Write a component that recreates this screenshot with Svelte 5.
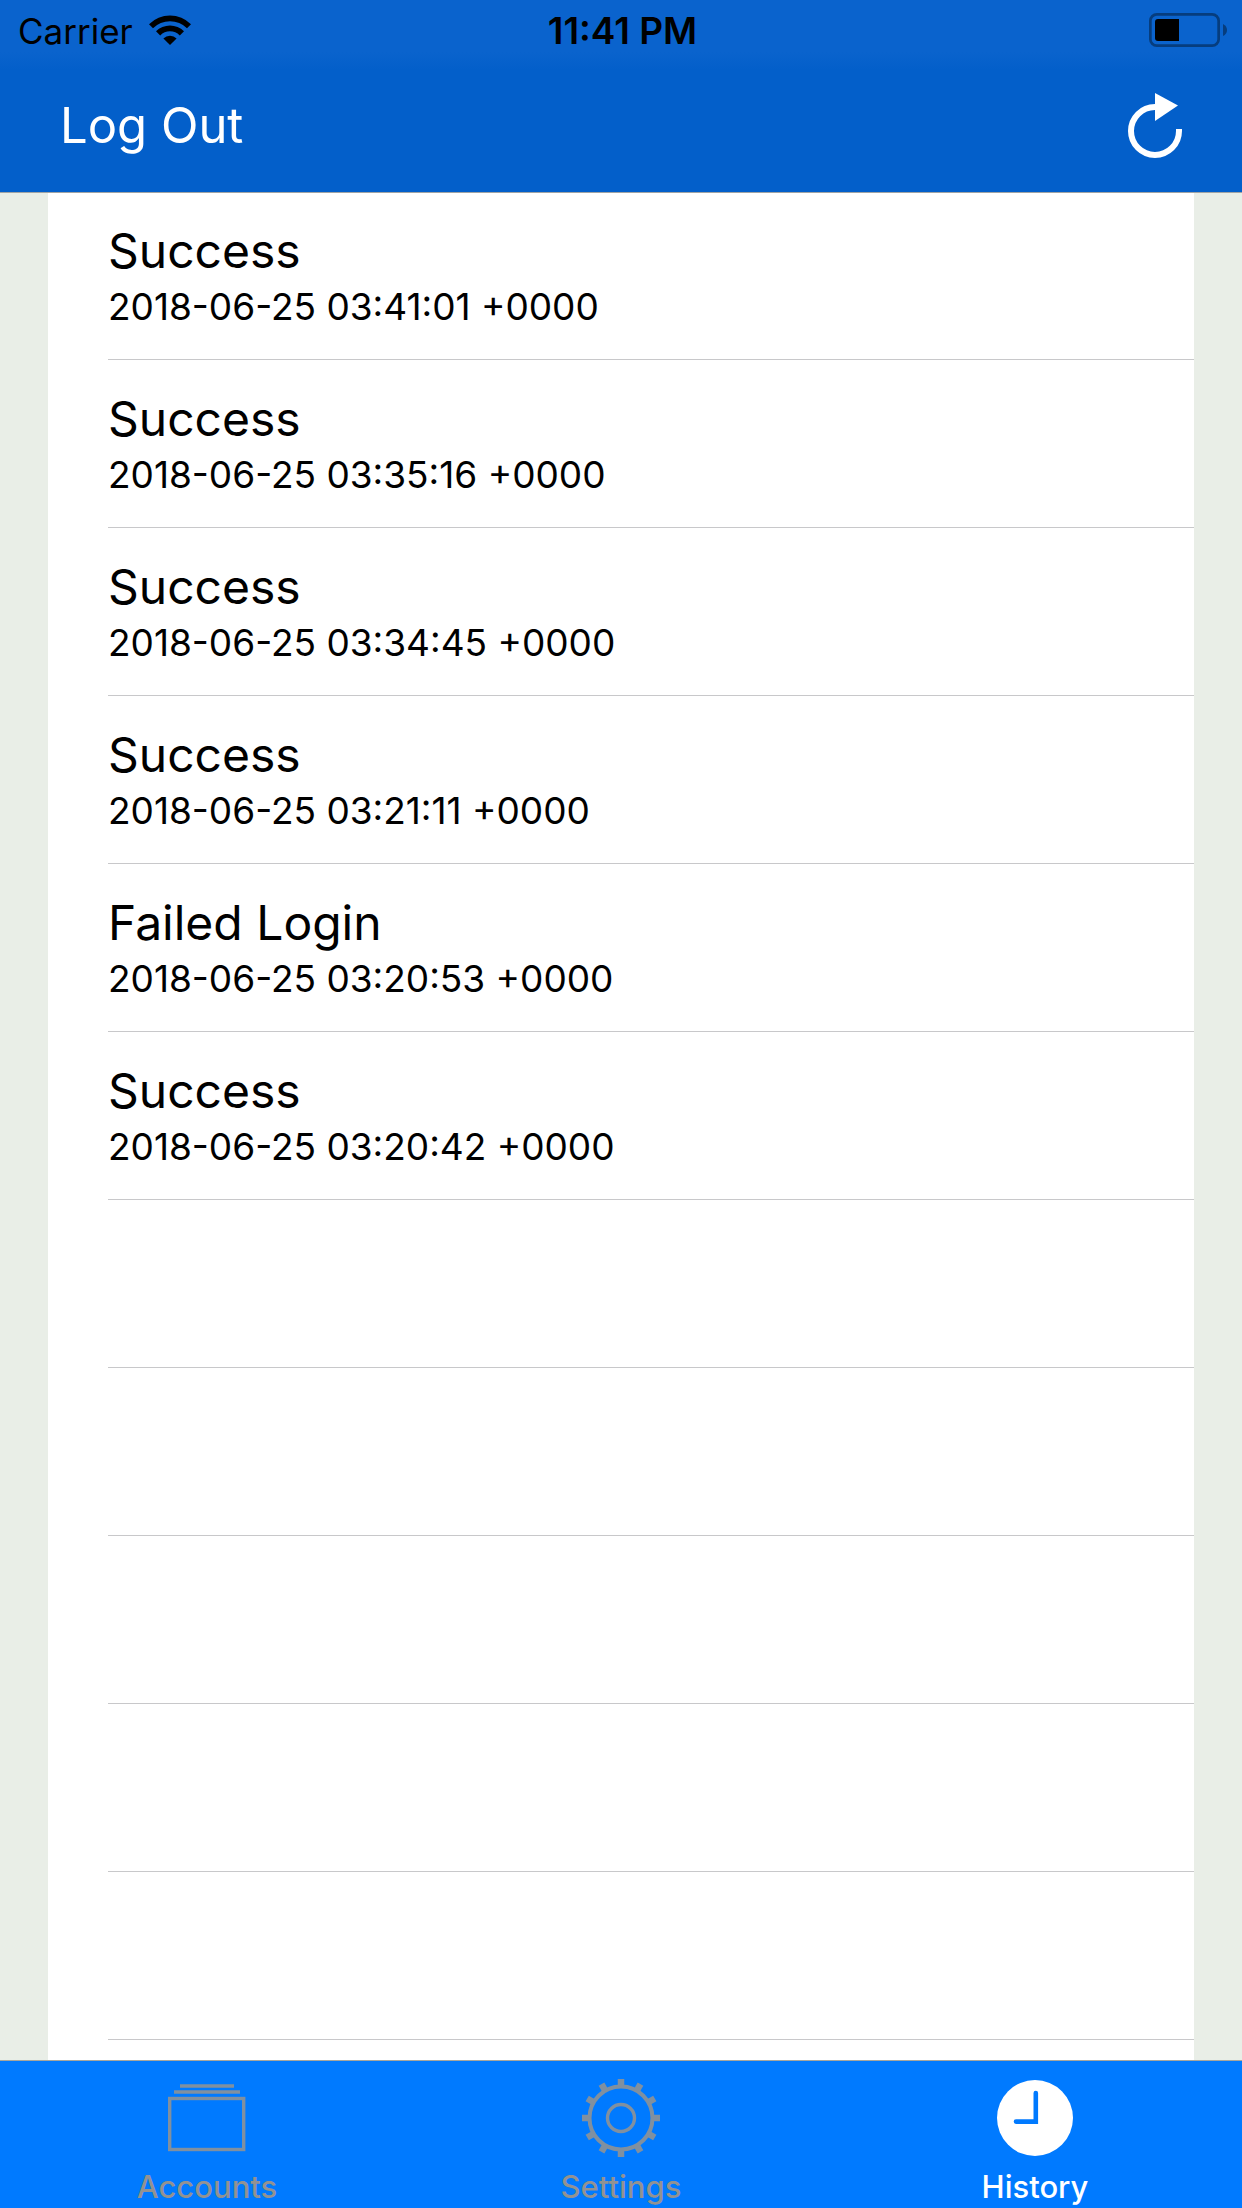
<script>
  const tabs = [
    { id: 'accounts', label: 'Accounts' },
    { id: 'settings', label: 'Settings' },
    { id: 'history', label: 'History' }
  ];
  const entries = [
    { result: 'Success', time: '2018-06-25 03:41:01 +0000' },
    { result: 'Success', time: '2018-06-25 03:35:16 +0000' },
    { result: 'Success', time: '2018-06-25 03:34:45 +0000' },
    { result: 'Success', time: '2018-06-25 03:21:11 +0000' },
    { result: 'Failed Login', time: '2018-06-25 03:20:53 +0000' },
    { result: 'Success', time: '2018-06-25 03:20:42 +0000' }
  ];
  const teeth = Array.from({ length: 12 }, (_, i) => i * 30);
  let active = $state('history');
</script>

<div class="screen">
  <header>
    <div class="status">
      <div class="carrier">
        <span>Carrier</span>
        <svg class="wifi" viewBox="0 0 42 30" width="42" height="30" aria-hidden="true">
          <path d="M0 9.2A29.7 29.7 0 0 1 42 9.2L38 13.2A24 24 0 0 0 4 13.2Z" />
          <path d="M7 16.2A19.8 19.8 0 0 1 35 16.2L30.8 20.4A13.9 13.9 0 0 0 11.2 20.4Z" />
          <path d="M14.4 23.4A9.3 9.3 0 0 1 27.6 23.4L21 30Z" />
        </svg>
      </div>
      <time>11:41 PM</time>
      <svg class="battery" viewBox="0 0 78 34" width="78" height="34" aria-hidden="true">
        <rect x="1.35" y="1.35" width="68.3" height="31.3" rx="6.5" fill="none" stroke="#063d7e" stroke-width="2.7" />
        <path d="M9 6H30V28H9A3 3 0 0 1 6 25V9A3 3 0 0 1 9 6Z" />
        <path d="M74 11Q78 13 78 17T74 23Z" fill="#063d7e" />
      </svg>
    </div>
    <nav class="bar">
      <button type="button" class="logout">Log Out</button>
      <button type="button" class="refresh" aria-label="Refresh">
        <svg viewBox="0 0 54 66" width="54" height="66" aria-hidden="true">
          <path d="M51 36V38A24 24 0 1 1 27 14" fill="none" stroke="#fff" stroke-width="6" />
          <path d="M27 0L50 12.5L27 28Z" fill="#fff" />
        </svg>
      </button>
    </nav>
  </header>

  <main>
    <ul>
      {#each entries as entry}
        <li>
          <div class="cell">
            <span class="result">{entry.result}</span>
            <span class="time">{entry.time}</span>
          </div>
        </li>
      {/each}
    </ul>
  </main>

  <nav class="tabs">
    {#each tabs as tab}
      <button type="button" class="tab" class:active={active === tab.id} onclick={() => (active = tab.id)}>
        <svg viewBox="0 0 78 78" width="78" height="78" aria-hidden="true">
          {#if tab.id === 'accounts'}
            <g fill="none" stroke="currentColor" stroke-width="3.4">
              <path d="M12 7H66M6 13H72" />
              <rect x="1.7" y="19.5" width="74" height="51" />
            </g>
          {:else if tab.id === 'settings'}
            <g fill="none" stroke="currentColor" stroke-width="4">
              <circle cx="39" cy="39" r="31.5" />
              <circle cx="39" cy="39" r="13.5" stroke-width="3.4" />
              {#each teeth as angle}
                <path d="M39 0V8" stroke-width="6.5" transform="rotate({angle} 39 39)" />
              {/each}
            </g>
          {:else}
            <circle cx="39" cy="39" r="38" fill="currentColor" />
            <path d="M39.8 14V42.6H20" fill="none" stroke="#007aff" stroke-width="4.6" stroke-linecap="round" />
          {/if}
        </svg>
        <span>{tab.label}</span>
      </button>
    {/each}
  </nav>
</div>

<style>
  :global(body) {
    margin: 0;
  }
  .screen {
    display: flex;
    flex-direction: column;
    height: 100vh;
    min-height: 600px;
    overflow: hidden;
    background: #e9eee7;
    color: #000;
    font-family: Inter, 'Liberation Sans', sans-serif;
  }
  button {
    margin: 0;
    padding: 0;
    border: 0;
    background: none;
    font-family: inherit;
    cursor: pointer;
  }
  svg {
    display: block;
  }
  header {
    flex: none;
    background: linear-gradient(#0a63cd 0, #0a63cd 52px, #035fca 70px);
    border-bottom: 1px solid #a0a4a5;
  }
  .status {
    display: grid;
    grid-template-columns: 1fr auto 1fr;
    align-items: center;
    height: 60px;
    padding: 0 15px 0 18px;
    font-size: 35px;
    line-height: 58px;
  }
  .carrier {
    display: flex;
    align-items: center;
    gap: 16px;
  }
  .carrier span,
  .status time {
    padding-top: 2px;
  }
  .status time {
    font-weight: 600;
    font-size: 37px;
  }
  .battery {
    justify-self: end;
  }
  .bar {
    display: flex;
    align-items: center;
    justify-content: space-between;
    height: 132px;
    padding: 0 60px;
  }
  .logout {
    color: #fff;
    font-size: 49px;
    line-height: 60px;
  }
  main {
    flex: 1;
    min-height: 0;
    margin: 0 48px;
    overflow: hidden;
    background: repeating-linear-gradient(#fff 0, #fff 166px, #c8c8ca 166px, #c8c8ca 167px, #fff 167px, #fff 168px);
    background-position: 60px 0;
    background-repeat: no-repeat;
    background-color: #fff;
  }
  ul {
    margin: 0;
    padding: 0 0 0 60px;
    list-style: none;
  }
  li {
    height: 168px;
  }
  .cell {
    display: flex;
    flex-direction: column;
    padding-top: 27px;
  }
  .result {
    font-size: 48px;
    line-height: 62px;
  }
  .time {
    font-size: 37px;
    line-height: 50px;
  }
  .tabs {
    flex: none;
    display: grid;
    grid-template-columns: repeat(3, 1fr);
    height: 147px;
    border-top: 1px solid #a8a69c;
    background: #007aff;
  }
  .tab {
    display: flex;
    flex-direction: column;
    align-items: center;
    justify-content: flex-start;
    gap: 12px;
    padding-top: 18px;
    color: #929292;
    font-size: 31px;
    font-weight: 500;
    line-height: 36px;
  }
  .tab svg {
    color: #8090a0;
  }
  .tab.active,
  .tab.active svg {
    color: #fff;
  }
</style>
